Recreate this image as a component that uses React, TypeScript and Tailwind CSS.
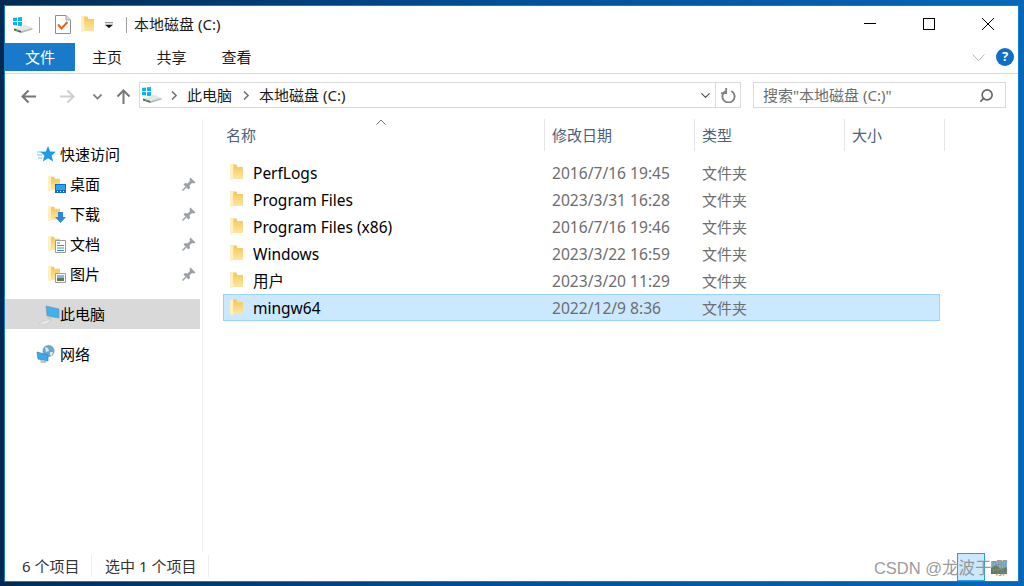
import { ChevronDown, Search } from 'lucide-react';

const uiFont = { fontFamily: '"Noto Sans", "Noto Sans CJK SC", sans-serif' };
const markFont = { fontFamily: '"Liberation Sans", "Noto Sans CJK SC", sans-serif' };

function Folder({ className = '' }: { className?: string }) {
  return (
    <svg viewBox="0 0 14 18" className={className}>
      <defs>
        <linearGradient id="fg" x1="0" y1="0" x2="0" y2="1">
          <stop offset="0" stopColor="#f3c65a" />
          <stop offset="1" stopColor="#ffe9a6" />
        </linearGradient>
      </defs>
      <path d="M0 .5h7l1 2.500h6v13H3.500l-1.500 1.500L0 16z" fill="url(#fg)" />
      <path d="M0 .5h3.500v15.500L1.500 17.500 0 16z" fill="#fff0c2" />
    </svg>
  );
}

function Drive({ className = '' }: { className?: string }) {
  return (
    <svg viewBox="0 0 20 16" className={className}>
      <path d="M0 1 4 .4V4H0zM5 .3 9 0v4H5zM0 5h4v3.600L0 8zM5 5h4v4.200L5 8.700z" fill="#08b4f4" />
      <path d="M1 11.500 12 7.500l7.500 3.500-11 3z" fill="#e6e6e6" />
      <path d="M1 11.500l7.500 2.500v2L1 13.500z" fill="#55635e" />
      <path d="M8.500 14l11-3v1.500L8.500 16z" fill="#b5b5b5" />
      <path d="M3 13l2.500 1" stroke="#3fd05a" strokeWidth="1" />
    </svg>
  );
}

function CheckDoc() {
  return (
    <svg viewBox="0 0 16 19" className="h-[19px] w-[16px]">
      <path d="M.5.500h10.500l4.500 4.500v13.500H.5z" fill="#fff" stroke="#8c8c8c" />
      <path d="M11 .5V5h4.500" fill="#ddd" stroke="#a5a5a5" />
      <path d="M3 9.500l3.500 4L12.500 7" fill="none" stroke="#e8601c" strokeWidth="2" />
    </svg>
  );
}

function Star() {
  return (
    <svg viewBox="0 0 19 16" className="h-[16px] w-[19px]">
      <path d="M11 0l2.200 5.500 5.800.2-4.500 3.800 1.700 6-5.200-3.300-5.200 3.300 1.700-6L3 5.700l5.800-.2z" fill="#1a9be6" />
      <path d="M0 6h5M0 9h5M1 12h4" stroke="#6fc3f2" strokeWidth="1" />
    </svg>
  );
}

function Arrow({ dir, className = '' }: { dir: 'left' | 'right' | 'up'; className?: string }) {
  const d = {
    left: 'M15 7.500H1.500M7.500 1.500l-6 6 6 6',
    right: 'M0 7.500h13.500M7.500 1.500l6 6-6 6',
    up: 'M7.500 15V1.500M1.500 7.500l6-6 6 6',
  }[dir];
  return (
    <svg viewBox="0 0 15 15" className={`h-[15px] w-[15px] ${className}`}>
      <path d={d} fill="none" stroke="currentColor" strokeWidth="2" />
    </svg>
  );
}

function Crumb() {
  return (
    <svg viewBox="0 0 6 9" className="h-[9px] w-[6px] text-[#777]">
      <path d="M1 .5l4 4-4 4" fill="none" stroke="currentColor" strokeWidth="1.600" />
    </svg>
  );
}

function PinIcon() {
  return (
    <svg viewBox="0 0 14 14" className="ml-auto mr-[4px] h-[14px] w-[14px] text-[#9aa0a6]">
      <path d="M8.500.5l5 5-1.500 1L10 6 7.500 8.500 8 11l-1.500 1.500-5-5L3 6l2.500.5L8 4l-.5-2z" fill="currentColor" />
      <path d="M4 10 .5 13.500" stroke="currentColor" strokeWidth="1.400" />
    </svg>
  );
}

function Badge({ kind }: { kind: string }) {
  if (kind === 'desk') {
    return (
      <svg viewBox="0 0 11 9" className="h-[9px] w-[11px]">
        <path d="M0 0h11v9H0z" fill="#0f6fc6" />
        <path d="M1 1h9v5H1z" fill="#29a3f5" />
        <path d="M2 7.500h1M5 7.500h1M8 7.500h1" stroke="#fff" />
      </svg>
    );
  }
  if (kind === 'down') {
    return (
      <svg viewBox="0 0 11 11" className="h-[11px] w-[11px]">
        <path d="M3 0h5v5h3L5.500 11 0 5h3z" fill="#2b86dc" />
      </svg>
    );
  }
  if (kind === 'doc') {
    return (
      <svg viewBox="0 0 11 13" className="h-[13px] w-[11px]">
        <path d="M.5.500h10v12H.5z" fill="#fff" stroke="#9a9a9a" />
        <path d="M2 3h3M2 5.500h7M2 8h7M2 10.500h7" stroke="#3a8ccc" />
      </svg>
    );
  }
  return (
    <svg viewBox="0 0 11 10" className="h-[10px] w-[11px]">
      <path d="M.5.500h10v9H.5z" fill="#fff" stroke="#9a9a9a" />
      <path d="M2 2h7v3H2z" fill="#7fb8e6" />
      <path d="M2 5h7v3H2z" fill="#5d7a55" />
    </svg>
  );
}

function Monitor() {
  return (
    <svg viewBox="0 0 22 19" className="h-[19px] w-[22px]">
      <path d="M7 1l13 3v9L8 11z" fill="#3eb1f2" stroke="#7b97a8" strokeWidth=".7" />
      <path d="M8 11l4 1v2l-3-.5z" fill="#c8c8c8" />
      <path d="M0 18l8-3h5l-6 4H1z" fill="#ececec" stroke="#bdbdbd" strokeWidth=".5" />
    </svg>
  );
}

function Network() {
  return (
    <svg viewBox="0 0 20 18" className="h-[18px] w-[20px]">
      <circle cx="12.500" cy="6" r="6" fill="#6ba6cf" />
      <path d="M9 2l3 1 1 3-3 1zM14 7l3 0-1 4-2-1z" fill="#d5e9f5" />
      <path d="M1 7l11 3v6L2 14z" fill="#35aaf0" stroke="#4a7f9f" strokeWidth=".7" />
      <path d="M4 15l6 1v2H5z" fill="#b9c3c9" />
    </svg>
  );
}

const quickLinks = [
  { label: '桌面', badge: 'desk' },
  { label: '下载', badge: 'down' },
  { label: '文档', badge: 'doc' },
  { label: '图片', badge: 'pic' },
];

const files = [
  { name: 'PerfLogs', date: '2016/7/16 19:45' },
  { name: 'Program Files', date: '2023/3/31 16:28' },
  { name: 'Program Files (x86)', date: '2016/7/16 19:46' },
  { name: 'Windows', date: '2023/3/22 16:59' },
  { name: '用户', date: '2023/3/20 11:29' },
  { name: 'mingw64', date: '2022/12/9 8:36', selected: true },
];

const columns = [
  { label: '名称', width: 'w-[322px] pl-[3px]' },
  { label: '修改日期', width: 'w-[150px] pl-[7px]' },
  { label: '类型', width: 'w-[150px] pl-[7px]' },
  { label: '大小', width: 'w-[100px] pl-[7px]' },
];

export default function App() {
  return (
    <div
      style={uiFont}
      className="relative h-[586px] w-[1024px] overflow-hidden bg-gradient-to-r from-[#012a52] via-[#01509a] to-[#0468b8] pb-[4px] pl-[4px] pr-[5px] pt-[5px] text-[15px] text-[#1a1a1a]"
    >
      <div className="flex h-full flex-col border border-[#1979ca] bg-white">
        {/* title bar */}
        <div className="flex h-[37px] items-center pl-[8px]">
          <Drive className="h-[16px] w-[20px]" />
          <div className="ml-[6px] h-[16px] w-px bg-[#a0a0a0]" />
          <div className="ml-[15px]"><CheckDoc /></div>
          <Folder className="ml-[10px] h-[17px] w-[13px]" />
          <svg viewBox="0 0 7 5" className="ml-[11px] h-[6px] w-[8px]">
            <path d="M0 .5h7M.5 2.500h6L3.500 5z" fill="#111" stroke="#111" strokeWidth=".5" />
          </svg>
          <div className="ml-[13px] h-[16px] w-px bg-[#a0a0a0]" />
          <span className="ml-[7px]">本地磁盘 (C:)</span>
          <div className="ml-auto mr-[1px] flex h-full pb-[2px]">
            <div className="flex h-full w-[59px] items-center justify-center"><div className="h-px w-[12px] bg-black" /></div>
            <div className="flex h-full w-[59px] items-center justify-center"><div className="h-[12px] w-[12px] border border-black" /></div>
            <div className="flex h-full w-[59px] items-center justify-center">
              <svg viewBox="0 0 12 12" className="h-[12px] w-[12px]"><path d="M0 0l12 12M12 0L0 12" stroke="#000" strokeWidth="1" /></svg>
            </div>
          </div>
        </div>

        {/* ribbon tabs */}
        <div className="flex h-[31px] border-b border-[#d9d9d9]">
          <div className="flex h-[28px] w-[70px] items-center justify-center bg-[#1979ca] text-white">文件</div>
          <div className="flex h-[28px] w-[64px] items-center justify-center">主页</div>
          <div className="flex h-[28px] w-[65px] items-center justify-center">共享</div>
          <div className="flex h-[28px] w-[65px] items-center justify-center">查看</div>
          <div className="ml-auto mr-[4px] flex h-[28px] items-center gap-[11px]">
            <svg viewBox="0 0 13 7" className="h-[7px] w-[13px]"><path d="M.5.500l6 6 6-6" fill="none" stroke="#b8b8b8" strokeWidth="1" /></svg>
            <div className="flex h-[18px] w-[18px] items-center justify-center rounded-full bg-[#0f6fc6] text-[13px] font-bold text-white">?</div>
          </div>
        </div>

        {/* address row */}
        <div className="flex h-[45px] items-start pt-[8px]">
          <div className="flex h-[26px] w-[134px] items-center pl-[16px] pt-[3px] text-[#777]">
            <Arrow dir="left" />
            <Arrow dir="right" className="ml-[24px] text-[#cfcfcf]" />
            <svg viewBox="0 0 9 6" className="ml-[18px] h-[6px] w-[9px]"><path d="M.5.500l4 4 4-4" fill="none" stroke="currentColor" strokeWidth="1.600" /></svg>
            <Arrow dir="up" className="ml-[14px]" />
          </div>
          <div className="flex h-[26px] w-[602px] items-center border border-[#d9d9d9]">
            <Drive className="ml-[2px] h-[16px] w-[20px]" />
            <div className="ml-[9px]"><Crumb /></div>
            <span className="ml-[10px]">此电脑</span>
            <div className="ml-[11px]"><Crumb /></div>
            <span className="ml-[10px]">本地磁盘 (C:)</span>
            <div className="ml-auto flex h-full w-[19px] items-center justify-center border-r border-[#d9d9d9] pr-[2px]">
              <ChevronDown className="h-[15px] w-[15px] text-[#555]" strokeWidth={2} />
            </div>
            <div className="flex h-full w-[24px] items-center justify-center">
              <svg viewBox="0 0 16 16" className="h-[15px] w-[15px]">
                <path d="M5 3.200A6.500 6.500 0 1 0 11 3.200" fill="none" stroke="#808080" strokeWidth="2" />
                <path d="M5.500 0v5.500H0" fill="none" stroke="#808080" strokeWidth="2" />
              </svg>
            </div>
          </div>
          <div className="ml-[12px] flex h-[26px] w-[253px] items-center justify-between border border-[#d9d9d9] pl-[9px] pr-[11px] text-[#6d6d6d]">
            <span>搜索"本地磁盘 (C:)"</span>
            <Search className="h-[15px] w-[15px] -scale-x-100 text-[#666]" strokeWidth={2.6} />
          </div>
        </div>

        {/* panes */}
        <div className="flex min-h-0 flex-1">
          <nav className="h-[433px] w-[198px] shrink-0 border-r border-[#f0f0f0] pr-[2px] text-black">
            <div className="mt-[20px] flex h-[30px] items-center pl-[32px]">
              <Star />
              <span className="ml-[4px]">快速访问</span>
            </div>
            {quickLinks.map((link) => (
              <div key={link.label} className="flex h-[30px] items-center pl-[43px]">
                <div className="flex h-[18px] w-[22px] items-end">
                  <Folder className="h-[18px] w-[12px]" />
                  <div className="-ml-[5px]"><Badge kind={link.badge} /></div>
                </div>
                <span>{link.label}</span>
                <PinIcon />
              </div>
            ))}
            <div className="mt-[10px] flex h-[30px] items-center bg-[#d9d9d9] pl-[34px]">
              <Monitor />
              <span className="ml-[-1px]">此电脑</span>
            </div>
            <div className="mt-[10px] flex h-[30px] items-center pl-[31px]">
              <Network />
              <span className="ml-[4px]">网络</span>
            </div>
          </nav>

          <main className="min-w-0 flex-1">
            <div className="relative ml-[20px] flex h-[32px] items-center text-[#4c607a]">
              {columns.map((col) => (
                <div key={col.label} className={`${col.width} flex h-full items-center border-r border-[#e5e5e5]`}>
                  {col.label}
                </div>
              ))}
              {/* sort arrow sits over the name column */}
              <svg viewBox="0 0 10 6" className="absolute left-[153px] top-0 h-[6px] w-[10px]">
                <path d="M.5 5.500l4.500-4.500 4.500 4.500" fill="none" stroke="#777" strokeWidth="1" />
              </svg>
            </div>
            <div className="ml-[20px] mt-[8px] w-[717px]">
              {files.map((file) => (
                <div
                  key={file.name}
                  className={`flex h-[27px] items-center border pt-[1px] ${file.selected ? 'border-[#99d1ff] bg-[#cce8ff]' : 'border-transparent'}`}
                >
                  <Folder className="mb-[2px] ml-[6px] h-[17px] w-[13px]" />
                  <span className="ml-[10px] w-[299px] pt-[2px] text-[15.5px] text-black">{file.name}</span>
                  <span className="w-[150px] pt-[2px] text-[15.6px] text-[#6d6d6d]">{file.date}</span>
                  <span className="text-[#6d6d6d]">文件夹</span>
                </div>
              ))}
            </div>
          </main>
        </div>

        {/* status bar */}
        <div className="flex h-[28px] items-start justify-between text-[#333]">
          <div className="flex h-[26px] items-center pl-[17px]">
            <span className="w-[70px] border-r border-[#eeeeee]">6 个项目</span>
            <span className="w-[117px] border-r border-[#eeeeee] pl-[13px]">选中 1 个项目</span>
          </div>
          <div className="flex h-full items-center pr-[6px]">
            <div className="h-full w-[28px] border border-[#26a0da] bg-[#cce8ff]" />
            <div className="flex h-full w-[27px] items-center justify-center">
              <svg viewBox="0 0 16 13" className="h-[13px] w-[16px]">
                <path d="M0 0h16v13H0z" fill="#7fb8e6" />
                <path d="M0 7l5-3 5 4 6-2v7H0z" fill="#5d7a55" />
              </svg>
            </div>
          </div>
        </div>
      </div>

      {/* CSDN watermark over the status bar */}
      <span style={markFont} className="absolute bottom-[7px] right-[16px] text-[16.5px] leading-[22px] text-[#8a8a8a] opacity-85">CSDN @龙波于哪</span>
    </div>
  );
}
